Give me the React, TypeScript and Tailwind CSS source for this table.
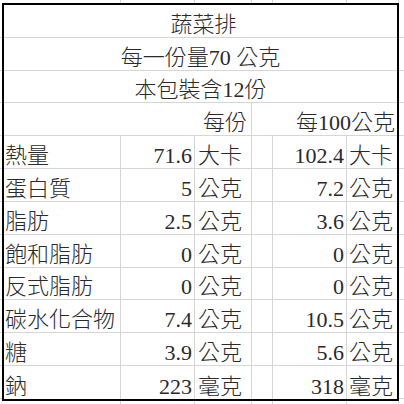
import React from 'react'

const rows: [string, string, string, string, string][] = [
  ['熱量', '71.6', '大卡', '102.4', '大卡'],
  ['蛋白質', '5', '公克', '7.2', '公克'],
  ['脂肪', '2.5', '公克', '3.6', '公克'],
  ['飽和脂肪', '0', '公克', '0', '公克'],
  ['反式脂肪', '0', '公克', '0', '公克'],
  ['碳水化合物', '7.4', '公克', '10.5', '公克'],
  ['糖', '3.9', '公克', '5.6', '公克'],
  ['鈉', '223', '毫克', '318', '毫克'],
]

const line = 'border-[#d6d6d6]'
const colWidths = ['w-[121px]', 'w-[74px]', 'w-[57px]', 'w-[21px]', 'w-[74px]', 'w-[52px]']

function ColStrip({ className }: { className: string }) {
  return (
    <div className={`flex ${className}`}>
      {colWidths.map((w, i) => (
        <div key={i} className={`${w} shrink-0 border-r ${line}`} />
      ))}
      <div className="flex-1" />
    </div>
  )
}

function RowStrip({ className }: { className: string }) {
  return (
    <div className={`h-[398px] py-[2px] grid grid-rows-[repeat(12,minmax(0,1fr))] ${className}`}>
      {Array.from({ length: 12 }).map((_, i) => (
        <div key={i} className={`border-b ${line}`} />
      ))}
    </div>
  )
}

export default function App() {
  const cell = `border-b ${line} flex items-end leading-none pb-[1px] overflow-hidden whitespace-nowrap`
  return (
    <div className="w-[404px] h-[404px] bg-white overflow-hidden flex flex-col text-[22px] font-light text-[#2a2a2a] font-['Liberation_Serif','Noto_Sans_CJK_TC',serif]">
      <ColStrip className="h-[3px] shrink-0" />
      <div className="flex shrink-0">
        <RowStrip className="w-[2px] shrink-0" />
        <div className="w-[397px] h-[398px] shrink-0 border-2 border-black grid grid-cols-[117px_74px_57px_21px_74px_1fr] grid-rows-[repeat(12,minmax(0,1fr))]">
          <div className={`${cell} col-span-6 justify-center items-center pt-[3px] pl-[6px]`}>蔬菜排</div>
          <div className={`${cell} col-span-6 justify-center items-center pt-[3px]`}>每一份量70 公克</div>
          <div className={`${cell} col-span-6 justify-center items-center pt-[3px]`}>本包裝含12份</div>
          <div className={`${cell} col-span-3 justify-end pr-[4px] border-r`}>每份</div>
          <div className={`${cell} col-span-3 justify-end pr-[2px]`}>每100公克</div>
          {rows.map((r, i) => {
            const last = i === rows.length - 1 ? 'border-b-0' : ''
            return (
              <React.Fragment key={r[0]}>
                <div className={`${cell} ${last} border-r pl-[1px]`}>{r[0]}</div>
                <div className={`${cell} ${last} border-r justify-end pr-[2px]`}>{r[1]}</div>
                <div className={`${cell} ${last} border-r pl-[3px]`}>{r[2]}</div>
                <div className={`${cell} ${last} border-r`} />
                <div className={`${cell} ${last} border-r justify-end pr-[2px]`}>{r[3]}</div>
                <div className={`${cell} ${last} pl-[2px]`}>{r[4]}</div>
              </React.Fragment>
            )
          })}
        </div>
        <RowStrip className="flex-1" />
      </div>
      <ColStrip className="flex-1" />
    </div>
  )
}
